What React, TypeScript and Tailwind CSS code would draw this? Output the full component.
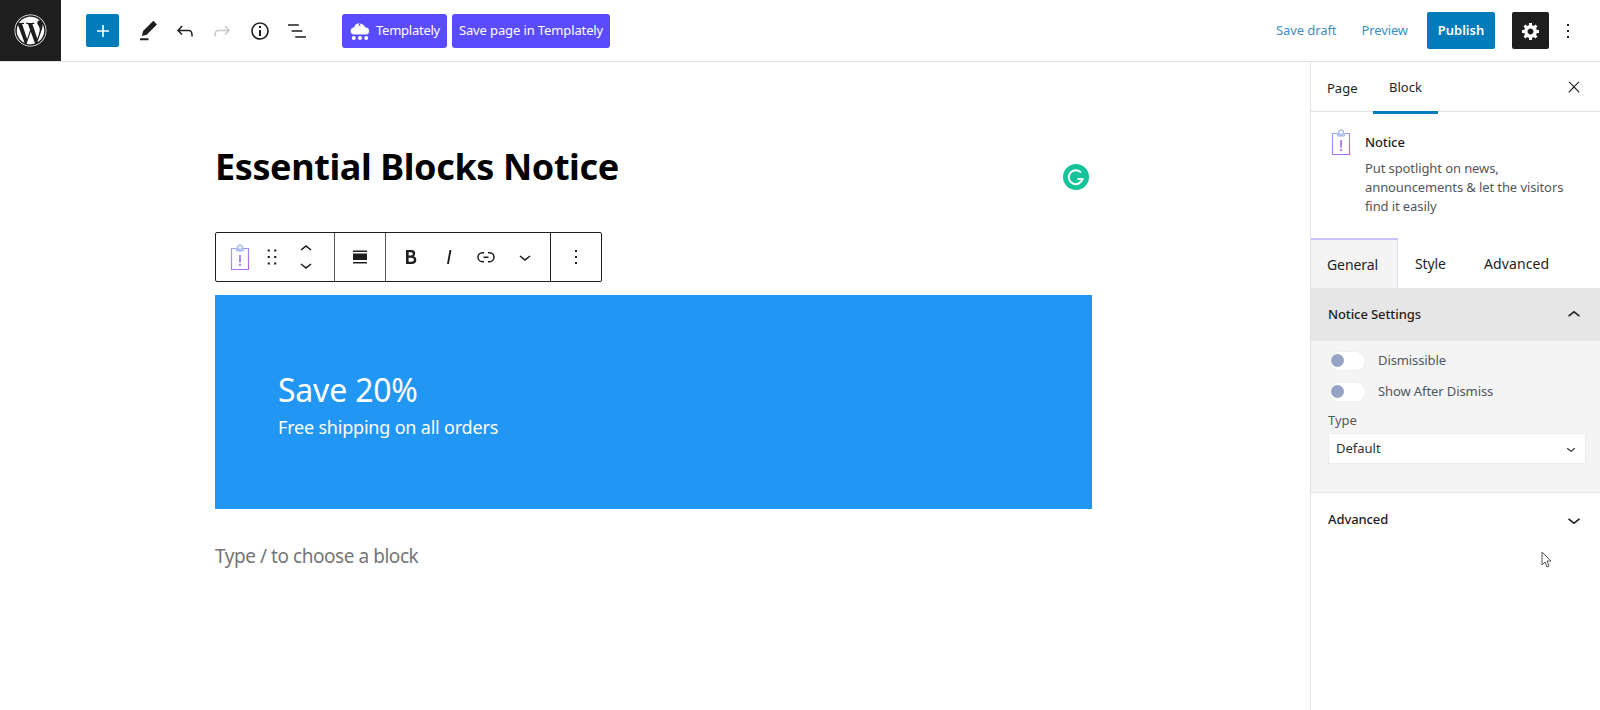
import React from "react";
import { FaWordpress } from "react-icons/fa";

const P = ({ d, size = 24, className = "", vb = "0 0 24 24" }: { d: string; size?: number; className?: string; vb?: string }) => (
  <svg width={size} height={size} viewBox={vb} fill="currentColor" className={`shrink-0 ${className}`}>
    <path d={d} />
  </svg>
);

const icons = {
  plus: "M18 11.2h-5.2V6h-1.6v5.2H6v1.6h5.2V18h1.6v-5.2H18z",
  pencil: "m19 7-3-3-8.5 8.5-1 4 4-1L19 7Zm-7 11.5H5V20h7v-1.5Z",
  undo: "M18.3 11.7c-.6-.6-1.4-.9-2.3-.9H6.7l2.9-3.3-1.1-1-4.5 5L8.5 16l1-1-2.7-2.7H16c.5 0 .9.2 1.3.5 1 1 1 3.4 1 4.5v.3h1.5v-.2c0-1.5 0-4.3-1.5-5.7z",
  redo: "M15.6 6.5l-1.1 1 2.9 3.3H8c-.9 0-1.7.3-2.3.9-1.4 1.5-1.4 4.2-1.4 5.6v.2h1.5v-.3c0-1.1 0-3.5 1-4.5.3-.3.7-.5 1.3-.5h9.2L14.5 15l1.1 1.1 4.6-4.6-4.6-5z",
  info: "M12 3.2c-4.8 0-8.8 3.9-8.8 8.8 0 4.8 3.9 8.8 8.8 8.8 4.8 0 8.8-3.9 8.8-8.8 0-4.8-4-8.8-8.8-8.8zm0 16c-4 0-7.2-3.3-7.2-7.2C4.8 8 8 4.8 12 4.8s7.2 3.3 7.2 7.2c0 4-3.2 7.2-7.2 7.2zM11 17h2v-6h-2v6zm0-8h2V7h-2v2z",
  list: "M13.8 5.2H3v1.5h10.8V5.2zm-3.6 12v1.5H21v-1.5H10.2zm7.2-6H6.6v1.5h10.8v-1.5z",
  gear: "M18 12h-2.18c-.17.7-.44 1.35-.81 1.93l1.54 1.54-2.1 2.1-1.54-1.54c-.58.36-1.23.63-1.91.79V19H8v-2.18c-.68-.16-1.33-.43-1.91-.79l-1.54 1.54-2.12-2.12 1.54-1.54c-.36-.58-.63-1.23-.79-1.91H1V9.03h2.17c.16-.7.44-1.35.8-1.94L2.43 5.55l2.1-2.1 1.54 1.54c.58-.37 1.24-.64 1.93-.81V2h3v2.18c.68.16 1.33.43 1.91.79l1.54-1.54 2.12 2.12-1.54 1.54c.36.59.64 1.24.8 1.94H18V12zm-8.5 1.5c1.66 0 3-1.34 3-3s-1.34-3-3-3-3 1.34-3 3 1.34 3 3 3z",
  dots: "M13 19h-2v-2h2v2zm0-6h-2v-2h2v2zm0-6h-2V5h2v2z",
  close: "M13 11.8l6.1-6.3-1-1-6.1 6.2-6.1-6.2-1 1 6.1 6.3-6.5 6.7 1 1 6.5-6.6 6.5 6.6 1-1z",
  up: "M6.5 12.4L12 8l5.5 4.4-.9 1.2L12 10l-4.5 3.6-1-1.2z",
  down: "M17.5 11.6L12 16l-5.5-4.4.9-1.2L12 14l4.6-3.6 1 1.2z",
  align: "M5 5.5h14V7H5V5.5zm0 11.5h14v1.5H5V17zm0-8.5h14V15H5V8.5z",
  link: "M10 17.389H8.444A5.194 5.194 0 1 1 8.444 7H10v1.5H8.444a3.694 3.694 0 0 0 0 7.389H10v1.5ZM14 7h1.556a5.194 5.194 0 0 1 0 10.39H14v-1.5h1.556a3.694 3.694 0 0 0 0-7.39H14V7Zm-4.5 6h5v-1.5h-5V13Z",
  drag: "M8 7h2V5H8v2zm0 6h2v-2H8v2zm0 6h2v-2H8v2zm6-14v2h2V5h-2zm0 8h2v-2h-2v2zm0 6h2v-2h-2v2z",
  bold: "M14.7 11.3c1-.6 1.5-1.6 1.5-3 0-2.3-1.3-3.4-4-3.4H7v14h5.8c1.4 0 2.5-.3 3.3-1 .8-.7 1.2-1.7 1.2-2.9.1-1.9-.8-3.1-2.6-3.7zm-5.1-4h2.3c.6 0 1.1.1 1.4.4.3.3.5.7.5 1.2s-.2 1-.5 1.2c-.3.3-.8.4-1.4.4H9.6V7.3zm4.6 9c-.4.3-1 .4-1.7.4H9.6v-3.9h2.9c.7 0 1.3.2 1.7.5.4.3.6.8.6 1.5s-.2 1.2-.6 1.5z",
  italic: "M12.5 5L10 19h1.9l2.5-14z",
};

const NoticeIcon = ({ id }: { id: string }) => (
  <svg width="20" height="27" viewBox="0 0 20 27" fill="none">
    <defs>
      <linearGradient id={id} x1="0" y1="0" x2="20" y2="27" gradientUnits="userSpaceOnUse">
        <stop offset="0" stopColor="#8fb4f5" />
        <stop offset="1" stopColor="#b65cf2" />
      </linearGradient>
    </defs>
    <path d="M6.5 4.5H1.5v21h17v-21h-5" stroke={`url(#${id})`} strokeWidth="1.2" />
    <circle cx="10" cy="3.8" r="2.6" stroke="#9fb6ee" strokeWidth="1.2" />
    <path d="M6.5 5h7v2h-7z" stroke="#9fb6ee" strokeWidth="1" />
    <path d="M10 11v7.5" stroke="#a565ee" strokeWidth="1.6" />
    <path d="M10 20v2" stroke="#a565ee" strokeWidth="1.6" />
  </svg>
);

const HeaderIcon = ({ d, w, className = "text-[#1e1e1e]", size = 24 }: { d: string; w: string; className?: string; size?: number }) => (
  <div className={`flex items-center justify-center ${w} ${className}`}>
    <P d={d} size={size} />
  </div>
);

const Toggle = ({ label }: { label: string }) => (
  <div className="flex items-center h-[20px]">
    <div className="relative w-[35px] h-[18px] rounded-full bg-white shadow-[0_0_0_1px_#efefef]">
      <div className="absolute left-[1px] top-[2px] w-[13px] h-[13px] rounded-full bg-[#97a3c4]" />
    </div>
    <span className="ml-[13px] text-[13px] text-[#50575e] tracking-[-0.1px]">{label}</span>
  </div>
);

export default function App() {
  return (
    <div className="relative w-[1600px] h-[710px] overflow-hidden bg-white flex flex-col text-[#1e1e1e] font-['Noto_Sans','Open_Sans',sans-serif]">
      <header className="flex items-center h-[62px] shrink-0 border-b border-[#e0e0e0]">
        <div className="w-[61px] h-[61px] bg-[#1e1e1e] flex items-center justify-center text-white">
          <FaWordpress size={33} />
        </div>
        <div className="ml-[25px] w-[33px] h-[33px] rounded-[2px] bg-[#007cba] text-white flex items-center justify-center">
          <P d={icons.plus} />
        </div>
        <HeaderIcon d={icons.pencil} w="w-[24px] ml-[17px]" size={29} />
        <HeaderIcon d={icons.undo} w="w-[24px] ml-[13px]" />
        <HeaderIcon d={icons.redo} w="w-[24px] ml-[13px]" className="text-[#c8c8c8]" />
        <HeaderIcon d={icons.info} w="w-[24px] ml-[14px]" />
        <HeaderIcon d={icons.list} w="w-[24px] ml-[13px]" />
        <button className="ml-[33px] h-[34px] w-[105px] rounded-[3px] bg-[#5a4bff] text-white flex items-center pl-[8px] text-[13px] tracking-[-0.25px]">
          <svg width="20" height="20" viewBox="0 0 20 20" fill="#fff" className="shrink-0">
            <path d="M3.5 13.5a3.6 3.6 0 0 1 .4-7.1c.8-2.6 3-4.2 5.6-4.2l-1 2.4 2.2.5-.9-2.7c2.7.3 4.8 1.9 5.5 4.2a3.4 3.4 0 0 1 .6 6.9z" />
            <circle cx="3.8" cy="17" r="2" />
            <circle cx="10" cy="17" r="2" />
            <circle cx="16.2" cy="17" r="2" />
          </svg>
          <span className="ml-[6px] whitespace-nowrap">Templately</span>
        </button>
        <button className="ml-[5px] h-[34px] w-[158px] rounded-[3px] bg-[#5a4bff] text-white flex items-center justify-center text-[13px] tracking-[-0.12px] whitespace-nowrap">
          Save page in Templately
        </button>
        <div className="ml-auto flex items-center">
          <span className="mt-[1px] text-[13px] text-[#3f8fc2] tracking-[-0.1px]">Save draft</span>
          <span className="mt-[1px] ml-[25px] text-[13px] text-[#3f8fc2] tracking-[-0.1px]">Preview</span>
          <button className="ml-[19px] w-[68px] h-[37px] rounded-[2px] bg-[#007cba] text-white text-[13px] font-semibold">Publish</button>
          <div className="ml-[17px] w-[37px] h-[37px] rounded-[2px] bg-[#1e1e1e] text-white flex items-center justify-center">
            <P d={icons.gear} size={20} vb="0 0 20 20" />
          </div>
          <div className="ml-[7px] mr-[20px] w-[24px] flex justify-center">
            <P d={icons.dots} />
          </div>
        </div>
      </header>

      <div className="flex flex-1 min-h-0">
        <main className="flex-1 min-w-0 pl-[215px]">
          <h1 className="mt-[77px] h-[56px] flex items-center text-[36px] font-bold text-black leading-none tracking-[-0.4px]">
            Essential Blocks Notice
          </h1>
          <div className="mt-[37px] w-[387px] h-[50px] flex border border-[#1e1e1e] rounded-[2px] bg-white">
            <div className="flex items-center w-[119px] border-r border-[#555]">
              <div className="w-[48px] flex justify-center"><NoticeIcon id="n1" /></div>
              <div className="w-[16px] flex justify-center"><P d={icons.drag} size={26} /></div>
              <div className="w-[52px] flex flex-col items-center">
                <P d={icons.up} className="-mb-[8px]" />
                <P d={icons.down} />
              </div>
            </div>
            <div className="flex items-center justify-center w-[51px] border-r border-[#555]">
              <P d={icons.align} />
            </div>
            <div className="flex items-center w-[165px] border-r border-[#1e1e1e]">
              <div className="w-[50px] flex justify-center"><P d={icons.bold} /></div>
              <div className="w-[26px] flex justify-center"><P d={icons.italic} /></div>
              <div className="w-[48px] flex justify-center"><P d={icons.link} /></div>
              <div className="w-[30px] flex justify-center"><P d={icons.down} /></div>
            </div>
            <div className="flex items-center justify-center flex-1">
              <P d={icons.dots} />
            </div>
          </div>
          <section className="mt-[13px] w-[877px] h-[214px] bg-[#2196f3] text-white pl-[63px] pt-[73px]">
            <div className="text-[32px] leading-[44px] tracking-[-0.2px]">Save 20%</div>
            <div className="mt-[1px] text-[18px] leading-[28px] tracking-[-0.2px]">Free shipping on all orders</div>
          </section>
          <p className="mt-[33px] text-[19px] leading-[28px] text-[#757575] tracking-[-0.45px]">Type / to choose a block</p>
        </main>

        <aside className="relative w-[290px] shrink-0 border-l border-[#e0e0e0] flex flex-col">
          <div className="relative flex items-center h-[50px] shrink-0 border-b border-[#e0e0e0] text-[13px]">
            <span className="ml-[16px] w-[46px] mt-[4px]">Page</span>
            <div className="relative h-full w-[65px] flex items-center justify-center border-b-[3px] border-[#007cba] box-content -mb-[1px] pt-[1px]">
              <span className="mt-[3px]">Block</span>
            </div>
            <div className="ml-auto mr-[14px] w-[24px] flex justify-center"><P d={icons.close} size={18} /></div>
          </div>
          <div className="flex h-[126px] shrink-0 pl-[20px] pt-[18px]">
            <div className="w-[34px] shrink-0 -mt-[1px]"><NoticeIcon id="n2" /></div>
            <div className="text-[13px] leading-[19px] tracking-[-0.1px]">
              <div className="font-medium leading-[24px] mb-[5px]">Notice</div>
              <div className="text-[#50575e]">Put spotlight on news,<br />announcements &amp; let the visitors<br />find it easily</div>
            </div>
          </div>
          <div className="flex items-stretch h-[50px] shrink-0 text-[14px] tracking-[-0.1px]">
            <div className="w-[87px] flex items-center pl-[16px] bg-[#f4f4f4] border-t-2 border-r border-t-[#c9c2ff] border-r-[#dcdcff] box-border">General</div>
            <div className="flex items-center ml-[17px] w-[69px]">Style</div>
            <div className="flex items-center tracking-[0.1px]">Advanced</div>
          </div>
          <div className="flex items-center h-[53px] shrink-0 pl-[17px] pr-[13px] bg-[#e6e6e6] text-[13px] font-medium tracking-[-0.1px]">
            <span>Notice Settings</span>
            <P d={icons.up} size={26} className="ml-auto" />
          </div>
          <div className="h-[152px] shrink-0 bg-[#f4f4f4] border-b border-[#e6e6e6] px-[17px] pt-[10px]">
            <div className="pl-[2px] flex flex-col gap-[11px]">
              <Toggle label="Dismissible" />
              <Toggle label="Show After Dismiss" />
            </div>
            <div className="mt-[9px] text-[13px] leading-[18px] text-[#50575e]">Type</div>
            <div className="mt-[4px] h-[31px] w-[258px] bg-white border border-[#ececec] flex items-center pl-[7px] pr-[5px] pt-[1px] text-[13px] text-[#2c3338]">
              <span>Default</span>
              <P d={icons.down} size={18} className="ml-auto" />
            </div>
          </div>
          <div className="flex items-center h-[53px] shrink-0 pl-[17px] pr-[13px] text-[13px] font-medium tracking-[-0.1px]">
            <span>Advanced</span>
            <P d={icons.down} size={26} className="ml-auto" />
          </div>
          <svg width="12" height="18" viewBox="0 0 12 18" className="absolute left-[230px] top-[489px]" fill="#fff" stroke="#555" strokeWidth="1">
            <path d="M1 1v13l3-3 2 5 2-1-2-5h4z" />
          </svg>
        </aside>
      </div>

      <svg width="26" height="26" viewBox="0 0 26 26" className="absolute left-[1063px] top-[164px]">
        <circle cx="13" cy="13" r="13" fill="#15c39a" />
        <path d="M18 8.5a7 7 0 1 0 1.5 6.5h-5" fill="none" stroke="#fff" strokeWidth="2" />
      </svg>
    </div>
  );
}
